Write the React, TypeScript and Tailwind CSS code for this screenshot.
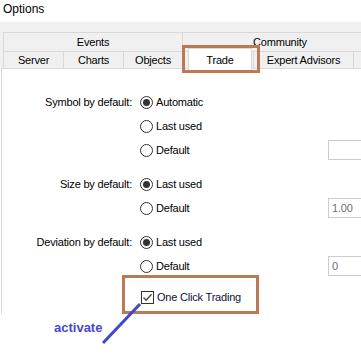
import React from "react";

function Radio({ checked }: { checked?: boolean }) {
  return (
    <span className="w-[13px] h-[13px] rounded-full border border-[#333333] bg-white flex items-center justify-center shrink-0">
      {checked && <span className="w-[7px] h-[7px] rounded-full bg-[#333333]" />}
    </span>
  );
}

function Field({ value }: { value?: string }) {
  return (
    <div className="h-[20px] w-[80px] border border-[#cccccc] bg-white pl-[3px] text-[#6d6d7a] leading-[18px]">
      {value}
    </div>
  );
}

function OptionRow({
  label,
  text,
  checked,
  field,
}: {
  label?: string;
  text: string;
  checked?: boolean;
  field?: string;
}) {
  return (
    <div className="grid grid-cols-[138px_188px_80px] items-center h-[24px]">
      <div className="text-right pr-[8px]">{label}</div>
      <div className="flex items-center gap-[3px]">
        <Radio checked={checked} />
        <span>{text}</span>
      </div>
      <div>{field !== undefined && <Field value={field} />}</div>
    </div>
  );
}

export default function App() {
  return (
    <div className="relative w-[361px] h-[362px] overflow-hidden bg-white text-black font-['Liberation_Sans',Arial,sans-serif] text-[11px] tracking-[-0.2px]">
      {/* title */}
      <div className="h-[22px] pt-[2px] pl-[3px] text-[12px] leading-[14px] tracking-normal">Options</div>

      {/* tab headers */}
      <div className="bg-[#f0f0f0] pt-[10px] w-[420px]">
        <div className="ml-[3px] flex h-[19px] border-t border-[#d9d9d9]">
          <div className="w-[180px] border-x border-[#d9d9d9] flex items-center justify-center">Events</div>
          <div className="w-[194px] flex items-center justify-center">Community</div>
        </div>
        <div className="ml-[3px] flex h-[17px] border-t border-[#d9d9d9]">
          <div className="w-[61px] border-x border-[#d9d9d9] flex items-center justify-center">Server</div>
          <div className="w-[60px] border-r border-[#d9d9d9] flex items-center justify-center">Charts</div>
          <div className="w-[59px] border-r border-[#d9d9d9] flex items-center justify-center">Objects</div>
          <div className="w-[70px] relative z-10">
            <div className="ml-[5px] w-[64px] -mt-[4px] h-[22px] bg-white border-x border-t border-[#d9d9d9] flex items-start justify-center pt-[3px]">
              Trade
            </div>
          </div>
          <div className="w-[101px] border-x border-[#d9d9d9] flex items-center justify-center">Expert Advisors</div>
          <div className="w-[40px] border-r border-[#d9d9d9]" />
        </div>
      </div>

      {/* panel */}
      <div className="ml-[1px] h-[246px] w-[420px] border-l border-t border-[#d9d9d9] bg-white pt-[21px]">
        <OptionRow label="Symbol by default:" text="Automatic" checked />
        <OptionRow text="Last used" />
        <OptionRow text="Default" field="" />

        <div className="mt-[10px]">
          <OptionRow label="Size by default:" text="Last used" checked />
          <OptionRow text="Default" field="1.00" />
        </div>

        <div className="mt-[10px]">
          <OptionRow label="Deviation by default:" text="Last used" checked />
          <OptionRow text="Default" field="0" />
        </div>

        <div className="mt-[7px] h-[24px] flex items-center pl-[139px] gap-[3px]">
          <span className="w-[13px] h-[13px] border border-[#333333] bg-white flex items-center justify-center shrink-0">
            <svg width="11" height="11" viewBox="0 0 11 11">
              <path d="M1.5 5.5 L4.2 8.2 L9.5 2.2" fill="none" stroke="#444444" strokeWidth="1.3" />
            </svg>
          </span>
          <span className="text-[#10103a]">One Click Trading</span>
        </div>
      </div>

      {/* annotation */}
      <div className="mt-[6px] pl-[54px] text-[13px] leading-[16px] font-bold tracking-normal text-[#4646cf]">activate</div>

      <div className="absolute left-[182px] top-[45px] w-[78px] h-[28px] border-[3px] border-[#b97a57] z-20" />
      <div className="absolute left-[122px] top-[275px] w-[137px] h-[39px] border-[3px] border-[#b97a57] z-20" />
      <svg className="absolute inset-0 z-20 pointer-events-none" width="361" height="362">
        <line x1="103" y1="343" x2="140" y2="304" stroke="#3f48cc" strokeWidth="3" />
      </svg>
    </div>
  );
}
